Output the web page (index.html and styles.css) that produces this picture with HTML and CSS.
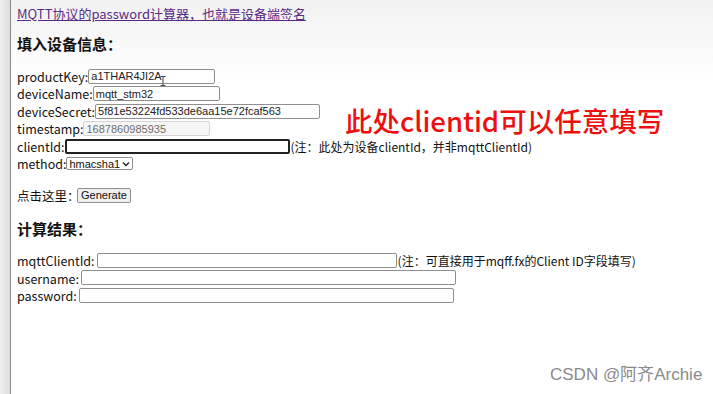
FILE: index.html
```html
<!DOCTYPE html>
<html lang="zh-CN">
<head>
    <meta charset="UTF-8">
    <title>MQTT password 计算器</title>
    <link rel="stylesheet" href="styles.css">
</head>
<body>
    <div class="page">
        <div class="gutter"></div>
        <main class="content">
            <a class="title-link" href="#">MQTT协议的password计算器，也就是设备端签名</a>
            <h3 class="section">填入设备信息：</h3>
            <div class="rows">
                <div class="row"><label>productKey:</label><input class="field w-key" value="a1THAR4JI2A"></div>
                <div class="row"><label>deviceName:</label><input class="field w-key" value="mqtt_stm32"></div>
                <div class="row"><label>deviceSecret:</label><input class="field w-secret" value="5f81e53224fd533de6aa15e72fcaf563"></div>
                <div class="row"><label>timestamp:</label><input class="field w-key readonly" value="1687860985935" readonly></div>
                <div class="row"><label>clientId:</label><input class="field w-secret focused"><span class="note">(注：此处为设备clientId，并非mqttClientId)</span></div>
                <div class="row"><label>method:</label><span class="select">hmacsha1<svg width="8" height="6" viewBox="0 0 8 6"><path d="M1 1.5 L4 4.5 L7 1.5" fill="none" stroke="#222" stroke-width="1.4"/></svg></span></div>
            </div>
            <div class="row gen"><span>点击这里：</span><button class="btn">Generate</button></div>
            <h3 class="section result-title">计算结果：</h3>
            <div class="rows result">
                <div class="row"><label>mqttClientId:</label><input class="field w-mqtt"><span class="note">(注：可直接用于mqff.fx的Client ID字段填写)</span></div>
                <div class="row"><label>username:</label><input class="field w-long"></div>
                <div class="row"><label>password:</label><input class="field w-long"></div>
            </div>
        </main>
        <svg class="cursor" width="6" height="10" viewBox="0 0 6 10"><path d="M0.5 0.5 H5.5 M3 0.5 V9.5 M0.5 9.5 H5.5" fill="none" stroke="#444" stroke-width="1"/></svg>
        <div class="annotation">此处clientid可以任意填写</div>
        <div class="watermark">CSDN @阿齐Archie</div>
    </div>
</body>
</html>
```

FILE: styles.css
```css
body {
    margin: 0;
    background: #fff;
}
.page {
    position: relative;
    display: flex;
    width: 713px;
    height: 394px;
    overflow: hidden;
    background: linear-gradient(#f1f1f1, #fff 80px);
    font-family: "Noto Sans CJK SC", sans-serif;
    font-size: 13px;
    color: #111;
}
.gutter {
    width: 10px;
    background: linear-gradient(to right, #eeeeee, #dedede);
    border-right: 1px solid #8a8a8a;
}
.content {
    flex: 1;
    padding: 4.5px 0 0 6px;
    display: flex;
    flex-direction: column;
    align-items: flex-start;
}
.title-link {
    line-height: 17px;
    color: #5a2a86;
    text-decoration: underline;
}
.section {
    margin: 12px 0 0;
    line-height: 20px;
    font-size: 15px;
    font-weight: bold;
}
.rows {
    margin-top: 13.75px;
}
.row {
    display: flex;
    align-items: center;
    height: 17.5px;
    white-space: nowrap;
    font-size: 12.5px;
}
.result .row {
    height: 17.8px;
}
.result label {
    margin-right: 2px;
}
.field {
    box-sizing: border-box;
    height: 15px;
    margin: 0;
    padding: 0 2px;
    border: 1px solid #8f8f8f;
    border-radius: 2px;
    background: #fff;
    font-family: "Liberation Sans", Arial, sans-serif;
    font-size: 11px;
    color: #222;
}
.w-key { width: 127px; }
.w-secret { width: 225px; }
.w-mqtt { width: 300px; }
.w-long { width: 375px; }
.readonly {
    background: #f6f6f6;
    border-color: #d4d4d4;
    color: #6d6d6d;
}
.focused {
    border: 2px solid #222;
}
.note {
    margin-left: 1px;
    font-size: 12px;
}
.select {
    display: flex;
    align-items: center;
    gap: 2px;
    box-sizing: border-box;
    height: 13px;
    padding: 0 2px;
    border: 1px solid #8f8f8f;
    border-radius: 2px;
    font-family: "Liberation Sans", Arial, sans-serif;
    font-size: 11px;
}
.gen {
    margin-top: 14.75px;
}
.gen span {
    width: 60px;
}
.btn {
    height: 15px;
    margin: 0;
    padding: 0 3px;
    border: 1px solid #8f8f8f;
    border-radius: 2px;
    background: #efefef;
    font-family: "Liberation Sans", Arial, sans-serif;
    font-size: 11px;
    line-height: 13px;
    color: #111;
}
.result-title {
    margin-top: 14.5px;
}
.result {
    margin-top: 12.3px;
}
.cursor {
    position: absolute;
    left: 160px;
    top: 76px;
}
.annotation {
    position: absolute;
    left: 345px;
    top: 108px;
    line-height: 24px;
    font-size: 27.5px;
    font-weight: 500;
    color: #ee0f0f;
}
.watermark {
    position: absolute;
    left: 550px;
    top: 364px;
    line-height: 22px;
    font-family: "Liberation Sans", sans-serif;
    font-size: 17px;
    color: #8a8a8a;
}
```
